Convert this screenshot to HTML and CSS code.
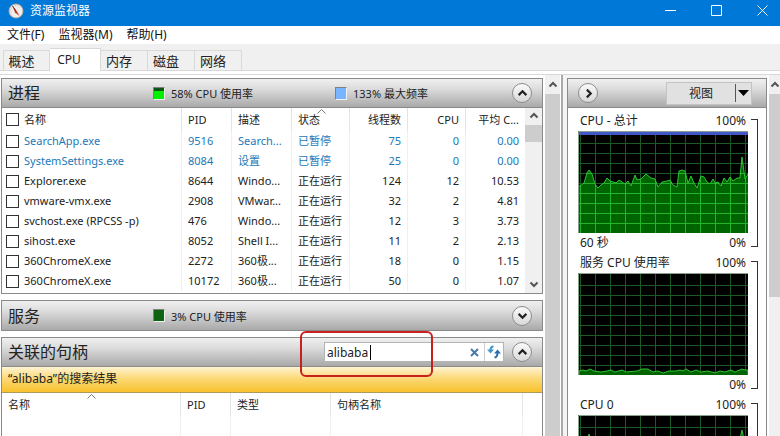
FILE: index.html
```html
<!DOCTYPE html>
<html lang="zh-CN">
<head>
  <meta charset="UTF-8" />
  <meta name="viewport" content="width=device-width, initial-scale=1.0"/>
  <title>资源监视器</title>
  <link rel="stylesheet" href="styles.css">
</head>
<body>
  <!-- Shared graph grid and icons -->
  <svg class="defs" width="0" height="0" aria-hidden="true">
    <symbol id="grid" viewBox="0 0 170 102">
      <path d="M2.5 0V102M17.5 0V102M32.5 0V102M47.5 0V102M62.5 0V102M77.5 0V102M92.5 0V102M107.5 0V102M122.5 0V102M137.5 0V102M152.5 0V102M167.5 0V102M0 12.5H170M0 22.5H170M0 32.5H170M0 42.5H170M0 52.5H170M0 62.5H170M0 72.5H170M0 82.5H170M0 92.5H170" fill="none" stroke="currentColor"/>
    </symbol>
    <symbol id="up" viewBox="0 0 10 10">
      <path d="M1.5 6.5L5 3L8.5 6.5" fill="none" stroke="currentColor" stroke-width="2"/>
    </symbol>
    <symbol id="down" viewBox="0 0 10 10">
      <path d="M1.5 3.5L5 7L8.5 3.5" fill="none" stroke="currentColor" stroke-width="2"/>
    </symbol>
  </svg>

  <header class="titlebar">
    <svg class="app-icon" width="16" height="16" viewBox="0 0 16 16">
      <circle cx="8" cy="8" r="7" fill="#f3eeea" stroke="#b9aaa4"/>
      <path d="M3.5 10.5A5 5 0 0 1 12 5" fill="none" stroke="#c9beb8" stroke-dasharray="1 1"/>
      <path d="M4.5 3L9 8.5L11.5 13L7 9.5Z" fill="#c33a2c"/>
      <path d="M4.5 3L8 8" stroke="#7c2018"/>
    </svg>
    <h1>资源监视器</h1>
    <div class="window-buttons">
      <button aria-label="最小化"><svg width="11" height="11" viewBox="0 0 11 11"><path d="M0 5.5H11"/></svg></button>
      <button aria-label="最大化"><svg width="11" height="11" viewBox="0 0 11 11"><path d="M.5 .5H10.5V10.5H.5Z"/></svg></button>
      <button aria-label="关闭"><svg width="11" height="11" viewBox="0 0 11 11"><path d="M.5 .5L10.5 10.5M10.5 .5L.5 10.5"/></svg></button>
    </div>
  </header>

  <nav class="menu">
    <button>文件(F)</button>
    <button>监视器(M)</button>
    <button>帮助(H)</button>
  </nav>

  <div class="tabs" role="tablist">
    <button class="tab" role="tab">概述</button>
    <button class="tab active" role="tab" aria-selected="true">CPU</button>
    <button class="tab" role="tab">内存</button>
    <button class="tab" role="tab">磁盘</button>
    <button class="tab" role="tab">网络</button>
  </div>

  <main class="page">
    <div class="sections">
      <section class="panel">
        <div class="panel-header">
          <h2>进程</h2>
          <span class="legend"><i class="swatch usage"></i>58% CPU 使用率</span>
          <span class="legend"><i class="swatch frequency"></i>133% 最大频率</span>
          <button class="round" aria-label="折叠进程"><svg width="11" height="11"><use href="#up"/></svg></button>
        </div>
        <div class="list">
          <table class="processes">
            <colgroup><col><col class="w-pid"><col class="w-desc"><col class="w-num"><col class="w-num"><col class="w-num"><col class="w-avg"></colgroup>
            <thead>
              <tr>
                <th><label><input type="checkbox">名称</label></th>
                <th>PID</th>
                <th>描述</th>
                <th class="sorted">状态<svg class="sort" width="9" height="5" viewBox="0 0 9 5"><path d="M.5 4.5L4.5 .5L8.5 4.5"/></svg></th>
                <th class="num">线程数</th>
                <th class="num">CPU</th>
                <th class="num">平均 C...</th>
              </tr>
            </thead>
            <tbody>
              <tr class="suspended"><td><label><input type="checkbox">SearchApp.exe</label></td><td>9516</td><td>Search...</td><td>已暂停</td><td class="num">75</td><td class="num">0</td><td class="num">0.00</td></tr>
              <tr class="suspended"><td><label><input type="checkbox">SystemSettings.exe</label></td><td>8084</td><td>设置</td><td>已暂停</td><td class="num">25</td><td class="num">0</td><td class="num">0.00</td></tr>
              <tr><td><label><input type="checkbox">Explorer.exe</label></td><td>8644</td><td>Windo...</td><td>正在运行</td><td class="num">124</td><td class="num">12</td><td class="num">10.53</td></tr>
              <tr><td><label><input type="checkbox">vmware-vmx.exe</label></td><td>2908</td><td>VMwar...</td><td>正在运行</td><td class="num">32</td><td class="num">2</td><td class="num">4.81</td></tr>
              <tr><td><label><input type="checkbox">svchost.exe (RPCSS -p)</label></td><td>476</td><td>Windo...</td><td>正在运行</td><td class="num">12</td><td class="num">3</td><td class="num">3.73</td></tr>
              <tr><td><label><input type="checkbox">sihost.exe</label></td><td>8052</td><td>Shell I...</td><td>正在运行</td><td class="num">11</td><td class="num">2</td><td class="num">2.13</td></tr>
              <tr><td><label><input type="checkbox">360ChromeX.exe</label></td><td>2272</td><td>360极...</td><td>正在运行</td><td class="num">18</td><td class="num">0</td><td class="num">1.15</td></tr>
              <tr><td><label><input type="checkbox">360ChromeX.exe</label></td><td>10172</td><td>360极...</td><td>正在运行</td><td class="num">50</td><td class="num">0</td><td class="num">1.07</td></tr>
            </tbody>
          </table>
          <div class="scrollbar list-scroll">
            <svg width="10" height="10"><use href="#up"/></svg>
            <div class="thumb"></div>
            <svg class="end" width="10" height="10"><use href="#down"/></svg>
          </div>
        </div>
      </section>

      <section class="panel">
        <div class="panel-header last">
          <h2>服务</h2>
          <span class="legend"><i class="swatch idle"></i>3% CPU 使用率</span>
          <button class="round" aria-label="展开服务"><svg width="11" height="11"><use href="#down"/></svg></button>
        </div>
      </section>

      <section class="panel handles">
        <div class="panel-header">
          <h2>关联的句柄</h2>
          <div class="search">
            <input type="text" value="alibaba" aria-label="搜索句柄">
            <span class="caret"></span>
            <button aria-label="清除"><svg width="9" height="9" viewBox="0 0 9 9"><path d="M1 1L8 8M8 1L1 8" stroke="#4a78a8" stroke-width="2"/></svg></button>
            <button class="refresh" aria-label="刷新">
              <svg width="14" height="14" viewBox="0 0 14 14">
                <path d="M6.500 1.500Q3.500 1.500 3.500 5" fill="none" stroke="#3f97cf" stroke-width="2"/>
                <path d="M0 4.500H7L3.500 8.500Z" fill="#3f97cf"/>
                <path d="M7.500 12.500Q10.500 12 10.500 8" fill="none" stroke="#2a6dad" stroke-width="2"/>
                <path d="M7 8.500H14L10.500 4.500Z" fill="#2a6dad"/>
              </svg>
            </button>
            <div class="highlight"></div>
          </div>
          <button class="round" aria-label="折叠关联的句柄"><svg width="11" height="11"><use href="#up"/></svg></button>
        </div>
        <p class="results">“alibaba”的搜索结果</p>
        <table>
          <colgroup><col><col class="w-pid"><col class="w-type"><col class="w-handle"><col class="w-rest"></colgroup>
          <thead>
            <tr>
              <th class="sorted">名称<svg class="sort" width="9" height="5" viewBox="0 0 9 5"><path d="M.5 4.5L4.5 .5L8.5 4.5"/></svg></th>
              <th>PID</th>
              <th>类型</th>
              <th>句柄名称</th>
              <th></th>
            </tr>
          </thead>
          <tbody>
            <tr><td></td><td></td><td></td><td></td><td></td></tr>
          </tbody>
        </table>
      </section>
    </div>

    <div class="scrollbar">
      <svg width="10" height="10"><use href="#up"/></svg>
      <div class="thumb full"></div>
    </div>

    <aside class="charts">
      <div class="panel-header">
        <button class="round" aria-label="收起图表"><svg width="11" height="11" viewBox="0 0 10 10"><path d="M3.500 1.500L7 5L3.500 8.500" fill="none" stroke="currentColor" stroke-width="2"/></svg></button>
        <button class="view"><span>视图</span><svg width="11" height="6" viewBox="0 0 11 6"><path d="M0 0H11L5.500 6Z"/></svg></button>
      </div>

      <div class="chart">
        <div>
          <div class="scale"><span>CPU - 总计</span><span>100%</span></div>
          <svg class="plot" width="170" height="102" viewBox="0 0 170 102">
            <defs><clipPath id="total"><path d="M0 55L2 55L6 52L9 42L11 39L14 43L17 53L20 57L23 54L26 52L29 47L32 50L38 52L41 49L47 53L50 50L53 55L57 44L59 49L63 48L68 43L73 47L77 48L80 56L84 51L89 50L92 49L95 54L99 56L101 40L104 39L107 40L110 52L113 45L116 52L119 57L123 45L126 46L129 51L132 53L135 48L137 52L140 51L143 55L146 47L149 51L152 46L155 50L159 47L162 47L164 26L167 48L170 43V102H0Z"/></clipPath></defs>
            <rect width="170" height="102"/>
            <use class="grid" href="#grid" width="170" height="102"/>
            <g clip-path="url(#total)">
              <rect class="fill" width="170" height="102"/>
              <use class="grid-lit" href="#grid" width="170" height="102"/>
            </g>
            <path class="line" d="M0 55L2 55L6 52L9 42L11 39L14 43L17 53L20 57L23 54L26 52L29 47L32 50L38 52L41 49L47 53L50 50L53 55L57 44L59 49L63 48L68 43L73 47L77 48L80 56L84 51L89 50L92 49L95 54L99 56L101 40L104 39L107 40L110 52L113 45L116 52L119 57L123 45L126 46L129 51L132 53L135 48L137 52L140 51L143 55L146 47L149 51L152 46L155 50L159 47L162 47L164 26L167 48L170 43"/>
            <path class="frame" d="M.5 102V.5H170"/>
            <rect class="max" x="1" y="1" width="169" height="3"/>
          </svg>
          <div class="scale"><span>60 秒</span><span>0%</span></div>
        </div>
        <div class="bracket"></div>
      </div>

      <div class="chart">
        <div>
          <div class="scale"><span>服务 CPU 使用率</span><span>100%</span></div>
          <svg class="plot" width="170" height="102" viewBox="0 0 170 102">
            <rect width="170" height="102"/>
            <use class="grid" href="#grid" width="170" height="102"/>
            <path class="fill line" d="M1 98L5 97L8 98L12 96L16 98L23 99L29 98L33 97L37 99L44 97L48 99L59 98L64 96L70 96L75 99L80 98L85 100L91 98L98 98L102 97L105 98L108 96L113 99L118 97L123 99L130 98L137 100L142 98L147 99L153 97L157 99L164 96L167 97L170 97V103H1Z"/>
            <path class="frame" d="M.5 102V.5H170"/>
          </svg>
          <div class="scale"><span></span><span>0%</span></div>
        </div>
        <div class="bracket"></div>
      </div>

      <div class="chart">
        <div>
          <div class="scale"><span>CPU 0</span><span>100%</span></div>
          <svg class="plot" width="170" height="102" viewBox="0 0 170 102">
            <rect width="170" height="102"/>
            <use class="grid" href="#grid" width="170" height="102"/>
            <path class="fill line" d="M1 40L7 30L11 19L15 30L24 42L40 36L57 32L70 28L84 42L101 26L119 44L140 36L159 32L162 24L164 15L167 30L170 28V103H1Z"/>
            <path class="frame" d="M.5 102V.5H170"/>
          </svg>
        </div>
        <div class="bracket"></div>
      </div>
    </aside>

    <div class="scrollbar">
      <svg width="10" height="10"><use href="#up"/></svg>
      <div class="thumb half"></div>
    </div>
  </main>
</body>
</html>
```
FILE: styles.css
```css
* {
    margin: 0;
    padding: 0;
    box-sizing: border-box;
}

body {
    display: flex;
    flex-direction: column;
    height: 100vh;
    overflow: hidden;
    background-color: white;
    color: #222;
    font-family: "Noto Sans", "Noto Sans CJK SC", sans-serif;
    font-size: 11px;
}

button,
input {
    font: inherit;
    color: inherit;
    border: none;
    background: none;
}

svg {
    display: block;
    flex-shrink: 0;
}

.defs {
    position: absolute;
}

/* Title bar */
.titlebar {
    display: flex;
    align-items: center;
    gap: 6px;
    height: 26px;
    flex-shrink: 0;
    padding: 0 0 5px 8px;
    background-color: #0078d7;
    color: white;
}

.titlebar h1 {
    font-size: 12px;
    font-weight: normal;
    line-height: 18px;
}

.window-buttons {
    display: flex;
    gap: 10px;
    margin-left: auto;
}

.window-buttons button {
    display: flex;
    align-items: center;
    justify-content: center;
    width: 36px;
    height: 20px;
}

.window-buttons path {
    fill: none;
    stroke: white;
}

/* Menu and tabs */
.menu {
    display: flex;
    gap: 14px;
    height: 18px;
    flex-shrink: 0;
    padding-left: 7px;
    font-size: 12px;
    line-height: 18px;
    color: #111;
}

.tabs {
    display: flex;
    align-items: flex-end;
    height: 27px;
    flex-shrink: 0;
    padding-left: 3px;
    background-color: #f0f0f0;
    border-bottom: 1px solid #d9d9d9;
}

.tab {
    width: 47px;
    height: 20px;
    padding-right: 10px;
    border: 1px solid #d9d9d9;
    border-width: 1px 1px 0 0;
    font-size: 13px;
    line-height: 18px;
}

.tab:first-child {
    border-left-width: 1px;
}

.tab.active {
    width: 51px;
    height: 23px;
    margin-bottom: -1px;
    padding-right: 12px;
    background-color: white;
    font-size: 12px;
}

/* Content area */
.page {
    display: flex;
    flex: 1;
    min-height: 0;
    margin-top: 3px;
    border-top: 1px solid #d9d9d9;
    padding-left: 1px;
}

.sections {
    display: flex;
    flex-direction: column;
    gap: 6px;
    flex: 1;
    min-width: 0;
    padding-top: 3px;
    margin-right: 2px;
}

.panel {
    flex-shrink: 0;
    border: 1px solid #8a8a8a;
}

.panel.handles {
    flex: 1 0 auto;
}

.panel-header {
    display: flex;
    align-items: center;
    height: 29px;
    padding: 0 10px 0 6px;
    background: linear-gradient(#f0f0f0, #dcdcdc 35%, #a9a9a9);
    border-bottom: 1px solid #8a8a8a;
}

.panel-header.last {
    border-bottom: none;
}

.panel-header h2 {
    flex-shrink: 0;
    width: 145px;
    font-size: 16px;
    font-weight: normal;
    line-height: 28px;
    white-space: nowrap;
}

.legend {
    display: flex;
    align-items: center;
    gap: 6px;
    width: 182px;
    flex-shrink: 0;
}

.legend + .legend {
    width: auto;
}

.swatch {
    width: 12px;
    height: 13px;
    border: 1px solid #808080;
    border-color: #808080 #f0f0f0 #f0f0f0 #808080;
}

.swatch.usage {
    background: linear-gradient(#0a5a14 3px, #00f000 3px);
}

.swatch.frequency {
    background-color: #78b4ff;
}

.swatch.idle {
    background-color: #0f6414;
}

.round {
    display: flex;
    align-items: center;
    justify-content: center;
    width: 20px;
    height: 20px;
    flex-shrink: 0;
    margin-left: auto;
    border: 1px solid #8c8c8c;
    border-radius: 50%;
    background: linear-gradient(#fafafa, #d8d8d8);
}

/* Tables */
.list {
    display: flex;
    height: 185px;
}

table {
    width: 100%;
    table-layout: fixed;
    border-collapse: separate;
    border-spacing: 0;
    line-height: 16px;
}

.processes {
    flex: 1;
    width: auto;
    align-self: flex-start;
}

.w-pid {
    width: 50px;
}

.w-desc {
    width: 60px;
}

.w-num {
    width: 58px;
}

.w-avg {
    width: 59px;
}

.w-type {
    width: 100px;
}

.w-handle {
    width: 192px;
}

.w-rest {
    width: 19px;
}

th,
td {
    height: 20px;
    padding: 0 6px;
    border-right: 1px solid #f0f0f0;
    font-weight: normal;
    text-align: left;
    white-space: nowrap;
}

th {
    height: 23px;
    border-color: #e4e4e4;
}

th:last-child,
td:last-child {
    border-right: none;
}

td:first-child,
.processes th:first-child {
    padding-left: 4px;
}

.num {
    text-align: right;
}

.suspended {
    color: #1c78b8;
}

table label {
    display: flex;
    align-items: center;
    gap: 5px;
}

input[type="checkbox"] {
    appearance: none;
    width: 13px;
    height: 13px;
    border: 1px solid #333;
    background-color: white;
}

.sorted {
    position: relative;
}

.sort {
    position: absolute;
    top: 1px;
    left: 50%;
    margin-left: -4px;
    fill: none;
    stroke: #777;
}

/* Scrollbars */
.scrollbar {
    display: flex;
    flex-direction: column;
    align-items: center;
    gap: 4px;
    width: 15px;
    flex-shrink: 0;
    padding-top: 5px;
    background-color: #f0f0f0;
    color: #555;
}

.scrollbar:last-child {
    width: 11px;
}

.thumb {
    width: 100%;
    height: 17px;
    background-color: #cdcdcd;
}

.thumb.full {
    flex: 1;
}

.thumb.half {
    height: 57%;
}

.scrollbar .end {
    margin: auto 0 4px;
}

.scrollbar.list-scroll {
    width: 17px;
    padding-top: 3px;
}

/* Handle search */
.search {
    position: relative;
    display: flex;
    width: 180px;
    height: 20px;
    margin-left: auto;
    margin-right: 8px;
    border: 1px solid #b4b4b4;
    background-color: white;
}

.search input {
    flex: 1;
    min-width: 0;
    padding-left: 2px;
    font-size: 12px;
    outline: none;
}

.search button {
    display: flex;
    align-items: center;
    justify-content: center;
    width: 19px;
}

.search .refresh {
    border-left: 1px solid #ccc;
}

.caret {
    position: absolute;
    top: 2px;
    left: 45px;
    width: 1px;
    height: 15px;
    background-color: black;
}

.highlight {
    position: absolute;
    top: -12px;
    left: -25px;
    width: 133px;
    height: 46px;
    border: 2px solid #c8201c;
    border-radius: 6px;
    pointer-events: none;
}

.search + .round {
    margin-left: 0;
}

.results {
    height: 26px;
    padding-left: 6px;
    border-bottom: 1px solid #b09a5a;
    background: linear-gradient(#fff4d2, #fbd978 45%, #f8c22c);
    font-size: 12px;
    line-height: 24px;
}

/* Charts */
.charts {
    width: 206px;
    flex-shrink: 0;
    margin: 0 2px 0 1px;
    padding: 3px 0 0 4px;
    border-left: 2px solid #aaa;
    background-color: #f4f4f4;
    font-size: 12px;
    overflow: hidden;
}

.charts .panel-header {
    height: 30px;
    padding: 0 14px 0 10px;
    border: 1px solid #8a8a8a;
}

.charts .round {
    margin-left: 0;
}

.view {
    display: flex;
    align-items: center;
    width: 86px;
    height: 23px;
    margin-left: auto;
    border: 1px solid #c4c4c4;
    background-color: #e1e1e1;
}

.view span {
    flex: 1;
}

.view svg {
    width: 16px;
    height: 18px;
    border-left: 1px solid #555;
    padding: 6px 2px;
}

.chart {
    display: flex;
    gap: 3px;
    padding-left: 10px;
    border: 1px solid #8a8a8a;
    border-width: 0 1px;
    background-color: white;
}

.panel-header + .chart {
    padding-top: 3px;
}

.scale {
    display: flex;
    justify-content: space-between;
    height: 20px;
    padding: 0 2px;
    line-height: 20px;
}

.bracket {
    width: 7px;
    margin: 8px 0 6px;
    border: 1px solid #333;
    border-left: none;
}

.grid {
    color: #1c5a26;
}

.grid-lit {
    color: #22b42a;
}

.fill {
    fill: #006400;
}

.line {
    stroke: #2cc434;
}

path.line:not(.fill) {
    fill: none;
}

.frame {
    fill: none;
    stroke: #8aa08c;
}

.max {
    fill: #4258c8;
}
```
